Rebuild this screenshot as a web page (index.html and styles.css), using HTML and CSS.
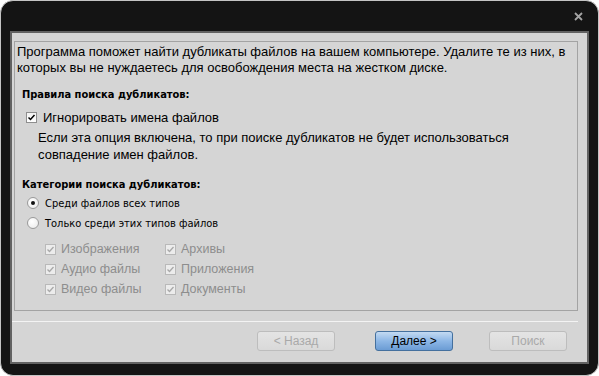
FILE: index.html
```html
<!DOCTYPE html>
<html lang="ru">
<head>
<meta charset="utf-8">
<title>Поиск дубликатов</title>
<link rel="stylesheet" href="styles.css">
</head>
<body>
<div class="window">
  <div class="titlebar">
    <svg class="close" width="9" height="9" viewBox="0 0 9 9"><path d="M1 1 L8 8 M8 1 L1 8" stroke="#a3a3a3" stroke-width="1.8" fill="none"/></svg>
  </div>
  <div class="client">
    <div class="panel">
      <p class="intro">Программа поможет найти дубликаты файлов на вашем компьютере. Удалите те из них, в<br>которых вы не нуждаетесь для освобождения места на жестком диске.</p>
      <h2 class="heading rules">Правила поиска дубликатов:</h2>
      <label class="check-row">
        <span class="box"><svg width="9" height="9" viewBox="0 0 9 9"><path d="M1.5 4.5 L3.5 6.5 L7.5 2" stroke="#000" stroke-width="1.5" fill="none"/></svg></span>
        <span class="check-label">Игнорировать имена файлов</span>
      </label>
      <p class="desc">Если эта опция включена, то при поиске дубликатов не будет использоваться<br>совпадение имен файлов.</p>
      <h2 class="heading cats">Категории поиска дубликатов:</h2>
      <div class="radios">
        <div class="radio-row"><span class="radio on"></span><span class="radio-label">Среди файлов всех типов</span></div>
        <div class="radio-row"><span class="radio"></span><span class="radio-label">Только среди этих типов файлов</span></div>
      </div>
      <div class="types">
        <div class="type"><span class="box off"><svg width="9" height="9" viewBox="0 0 9 9"><path d="M1.5 4.5 L3.5 6.5 L7.5 2" stroke="#a8a8a8" stroke-width="1.3" fill="none"/></svg></span>Изображения</div>
        <div class="type"><span class="box off"><svg width="9" height="9" viewBox="0 0 9 9"><path d="M1.5 4.5 L3.5 6.5 L7.5 2" stroke="#a8a8a8" stroke-width="1.3" fill="none"/></svg></span>Архивы</div>
        <div class="type"><span class="box off"><svg width="9" height="9" viewBox="0 0 9 9"><path d="M1.5 4.5 L3.5 6.5 L7.5 2" stroke="#a8a8a8" stroke-width="1.3" fill="none"/></svg></span>Аудио файлы</div>
        <div class="type"><span class="box off"><svg width="9" height="9" viewBox="0 0 9 9"><path d="M1.5 4.5 L3.5 6.5 L7.5 2" stroke="#a8a8a8" stroke-width="1.3" fill="none"/></svg></span>Приложения</div>
        <div class="type"><span class="box off"><svg width="9" height="9" viewBox="0 0 9 9"><path d="M1.5 4.5 L3.5 6.5 L7.5 2" stroke="#a8a8a8" stroke-width="1.3" fill="none"/></svg></span>Видео файлы</div>
        <div class="type"><span class="box off"><svg width="9" height="9" viewBox="0 0 9 9"><path d="M1.5 4.5 L3.5 6.5 L7.5 2" stroke="#a8a8a8" stroke-width="1.3" fill="none"/></svg></span>Документы</div>
      </div>
    </div>
    <div class="sep"></div>
    <div class="footer">
      <button class="btn disabled">&lt; Назад</button>
      <button class="btn primary">Далее &gt;</button>
      <button class="btn disabled">Поиск</button>
    </div>
  </div>
</div>
</body>
</html>
```

FILE: styles.css
```css
* { box-sizing: border-box; }
html, body { margin: 0; padding: 0; background: #ffffff; }
body { width: 599px; height: 376px; overflow: hidden; font-family: "Liberation Sans", Arial, sans-serif; }

.window {
  width: 599px;
  height: 376px;
  background: #141414;
  border: 1px solid #c4c4c4;
  border-radius: 13px;
  padding: 0 9px 11px 9px;
  display: flex;
  flex-direction: column;
}

.titlebar {
  height: 30px;
  display: flex;
  justify-content: flex-end;
  align-items: center;
  padding-right: 6px;
}
.close { display: block; }

.client {
  flex: 1;
  background: #d5d5d5;
  border: 2px solid #626262;
  display: flex;
  flex-direction: column;
}

.panel {
  margin: 8px 9px 0 2px;
  height: 270px;
  border: 1px solid #a3a3a3;
  padding: 2px 0 0 2px;
}

.intro {
  margin: 0;
  font-size: 13px;
  line-height: 16px;
  color: #000;
  white-space: nowrap;
}

.heading {
  margin: 0;
  font-family: "DejaVu Sans Condensed", "DejaVu Sans", sans-serif;
  font-weight: bold;
  font-size: 11px;
  line-height: 16px;
  color: #000;
  padding-left: 5px;
}
.heading.rules { margin-top: 11px; }
.heading.cats { margin-top: 14px; }

.check-row {
  display: flex;
  align-items: center;
  height: 16px;
  margin-top: 6px;
  padding-left: 9px;
}
.check-label { font-size: 13px; color: #000; margin-left: 6px; }

.box {
  width: 11px;
  height: 11px;
  border: 1px solid #8e8e8e;
  background: linear-gradient(#f2f2f2, #ffffff);
  display: flex;
  align-items: center;
  justify-content: center;
  flex: none;
}
.box svg { display: block; }
.box.off { border-color: #b9b9b9; background: #ececec; }

.desc {
  margin: 4px 0 0 0;
  padding-left: 21px;
  font-size: 13px;
  line-height: 17px;
  color: #000;
  white-space: nowrap;
}

.radios { margin-top: 0; padding-left: 10px; }
.radio-row { display: flex; align-items: center; height: 20px; }
.radio {
  width: 12px;
  height: 12px;
  border-radius: 50%;
  border: 1px solid #9a9a9a;
  background: radial-gradient(circle at 40% 35%, #ffffff, #e9e9e9);
  display: flex;
  align-items: center;
  justify-content: center;
  flex: none;
}
.radio.on::after {
  content: "";
  width: 4px;
  height: 4px;
  border-radius: 50%;
  background: #111;
}
.radio-label {
  margin-left: 6px;
  font-family: "DejaVu Sans Condensed", "DejaVu Sans", sans-serif;
  font-size: 11px;
  color: #000;
}

.types {
  margin-top: 6px;
  padding-left: 28px;
  display: grid;
  grid-template-columns: 120px 120px;
  grid-auto-rows: 20px;
}
.type {
  display: flex;
  align-items: center;
  font-size: 12.5px;
  color: #8d8d8d;
}
.type .box { margin-right: 5px; }

.sep {
  margin: 10px 9px 0 0;
  height: 1px;
  background: #f3f3f3;
}

.footer {
  display: flex;
  justify-content: flex-end;
  padding: 9px 20px 0 0;
}

.btn {
  width: 78px;
  height: 20px;
  border-radius: 3px;
  font-family: "Liberation Sans", Arial, sans-serif;
  font-size: 12px;
  padding: 0;
  line-height: 18px;
}
.btn.disabled {
  border: 1px solid #bdbdbd;
  background: linear-gradient(#e4e4e4, #d9d9d9);
  color: #a9a9a9;
}
.btn.primary {
  margin: 0 36px 0 40px;
  border: 1px solid #44709e;
  background: linear-gradient(#c3daf2, #8db7e6 50%, #6b9cd4);
  color: #000;
}
```
